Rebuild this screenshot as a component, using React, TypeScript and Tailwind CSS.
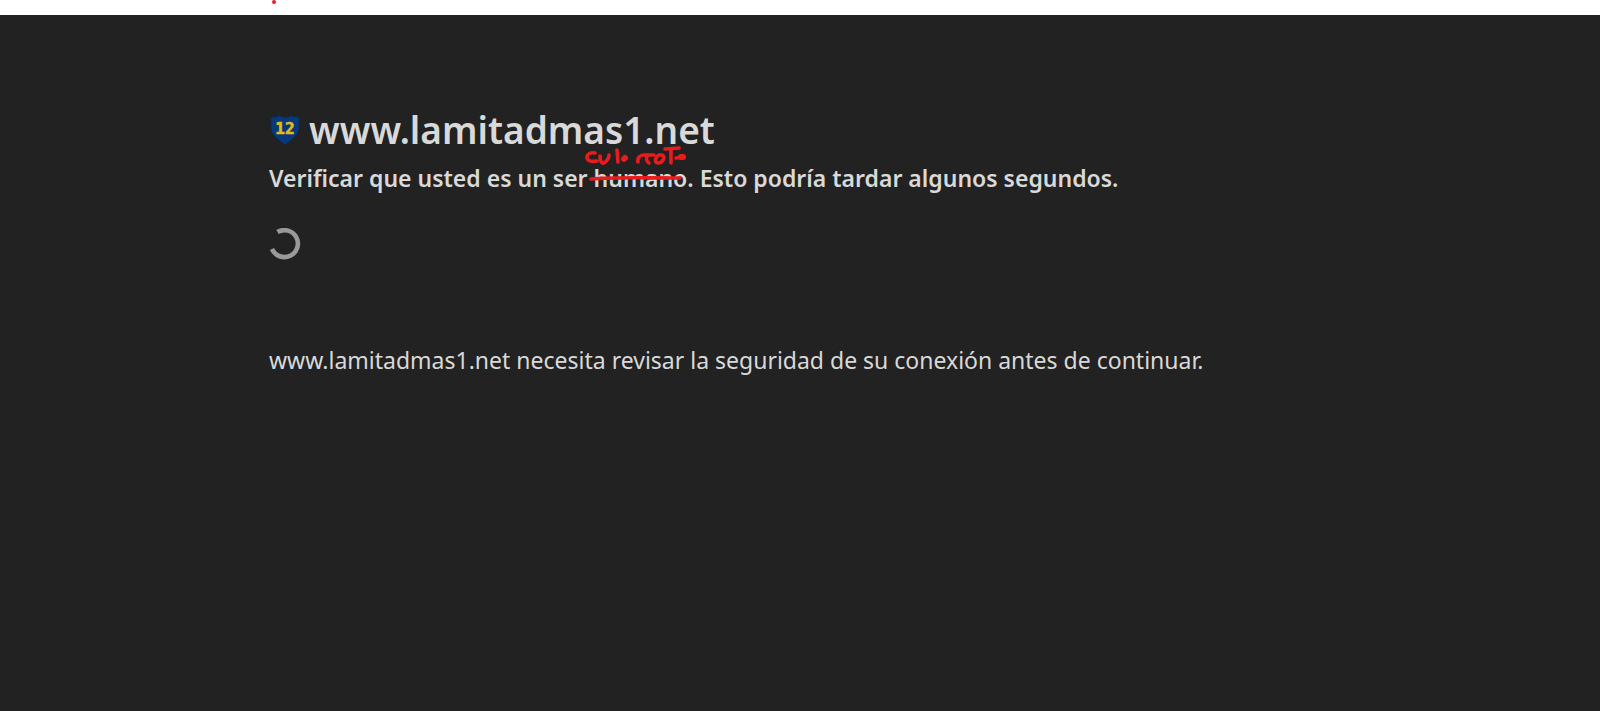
import React from "react";

const ShieldIcon = () => (
  <svg viewBox="0 0 32 32" className="size-8 shrink-0" role="img" aria-label="12">
    <path
      d="M4 2 Q7 4 10 1 Q13 4 16 3 Q19 4 22 1 Q25 4 28 2 L31 6 C29 9 31 12 30 16 C28 23 22 26 16 31 C10 26 4 23 2 16 C1 12 3 9 1 6Z"
      fill="#043a7c"
      stroke="#172338"
    />
    <text
      x="16"
      y="20"
      textAnchor="middle"
      fontSize="16"
      fontWeight="700"
      fill="#e3b91b"
      stroke="#e3b91b"
      strokeWidth="0.6"
      className="font-['DejaVu_Sans_Mono',monospace]"
    >
      12
    </text>
  </svg>
);

const Spinner = () => (
  <svg viewBox="0 0 32 32" className="size-8" role="status" aria-label="Cargando">
    <path d="M8.5 4 A13.5 13.5 0 1 1 3 21" fill="none" stroke="#999999" strokeWidth="4.6" />
  </svg>
);

// Red pen marks over the crossed-out word
const PenMarks = () => (
  <svg
    viewBox="0 0 110 44"
    className="absolute -top-4 -left-2.5 h-11 w-[110px] max-w-none"
    fill="none"
    stroke="#e81c1c"
    strokeWidth="3.6"
    strokeLinecap="round"
    strokeLinejoin="round"
    aria-hidden="true"
  >
    <path d="M11 9 C7 8 3 10 3 13 C3 17 7 18 13 17" />
    <path d="M16 12 C16 18 18 20 20 19 C23 17 25 14 25 11" />
    <path d="M33 6 L34 18" />
    <path d="M40 15 L41 14" strokeWidth="6" />
    <path d="M54 18 C53 14 56 11 60 11 L70 11 M63 12 C62 15 63 18 65 19" />
    <path d="M75 11 C71 13 70 19 74 19 C79 19 82 12 78 11 C77 11 76 11 75 11" />
    <path d="M87 5 L87 19 M81 5 L95 4" />
    <path d="M92 14 L99 13" />
    <path d="M97 13 L99 13" strokeWidth="6" />
    <path d="M7 35 C30 33 60 34 96 34" />
  </svg>
);

const App = () => {
  return (
    <div className="flex min-h-screen flex-col bg-[#222222] font-['Noto_Sans','Open_Sans',sans-serif] text-[#d9d9d9]">
      <div className="h-[15px] bg-white">
        <svg viewBox="0 0 1600 15" className="h-full w-full" aria-hidden="true">
          <circle cx="274" cy="2" r="2" fill="#ed1c24" />
        </svg>
      </div>

      <main className="mx-auto w-full max-w-[1110px] px-6 pt-[85px]">
        <h1 className="flex items-center gap-2 text-[37px] leading-[60px] font-semibold">
          <ShieldIcon />
          www.lamitadmas1.net
        </h1>
        <h2 className="text-[23px] leading-9 font-semibold">
          Verificar que usted es un ser{" "}
          <span className="relative inline-block">
            humano
            <PenMarks />
          </span>
          . Esto podría tardar algunos segundos.
        </h2>

        <div className="mt-8">
          <Spinner />
        </div>

        <p className="mt-[82px] text-[23px] leading-9">
          www.lamitadmas1.net necesita revisar la seguridad de su conexión antes de continuar.
        </p>
      </main>
    </div>
  );
};

export default App;
